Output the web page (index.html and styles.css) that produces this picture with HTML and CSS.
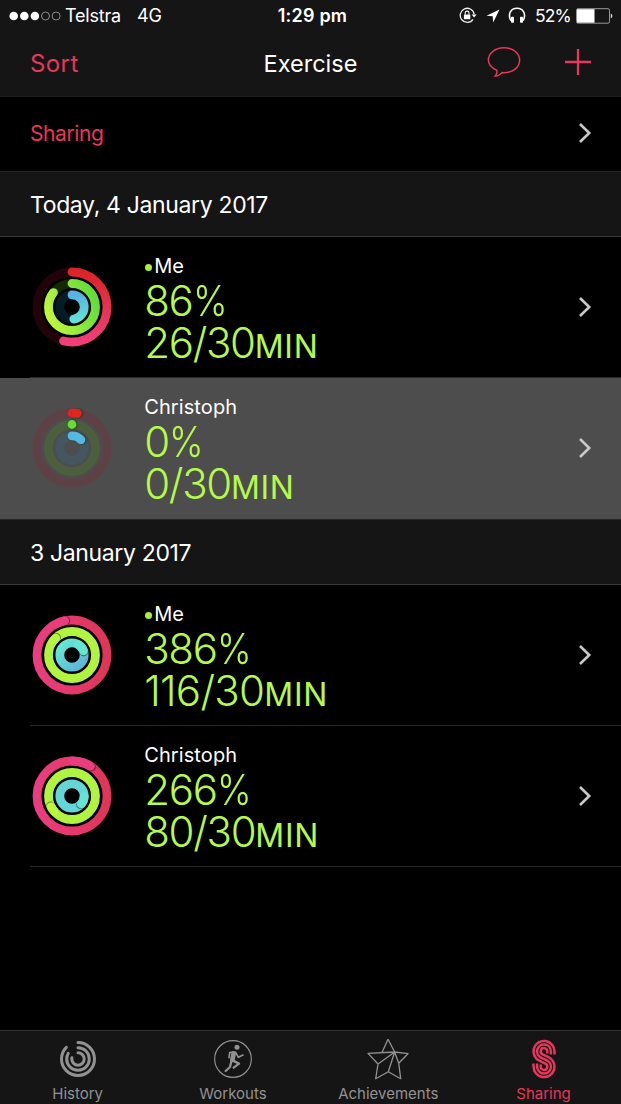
FILE: index.html
```html
<!DOCTYPE html>
<html lang="en">
<head>
  <meta charset="UTF-8" />
  <meta name="viewport" content="width=device-width, initial-scale=1.0" />
  <title>Exercise</title>
  <link rel="stylesheet" href="styles.css">
</head>
<body>

  <!-- Shared shapes and gradients -->
  <svg class="defs" width="0" height="0">
    <defs>
      <linearGradient id="red" x1="1" y1="0.5" x2="0" y2="0.5">
        <stop offset="0" stop-color="#dc2326" />
        <stop offset="0.5" stop-color="#e63350" />
        <stop offset="1" stop-color="#ee3f7c" />
      </linearGradient>
      <linearGradient id="green" x1="0.7" y1="1" x2="0.3" y2="0">
        <stop offset="0" stop-color="#62dd3c" />
        <stop offset="1" stop-color="#bdf53c" />
      </linearGradient>
      <linearGradient id="blue" x1="1" y1="0.5" x2="0" y2="0.5">
        <stop offset="0" stop-color="#55b4e4" />
        <stop offset="1" stop-color="#62e0d8" />
      </linearGradient>
      <linearGradient id="pinkFull" x1="0.5" y1="1" x2="0.5" y2="0">
        <stop offset="0" stop-color="#df3558" />
        <stop offset="1" stop-color="#ea3d80" />
      </linearGradient>
      <linearGradient id="blueFull" x1="0" y1="1" x2="1" y2="0">
        <stop offset="0" stop-color="#5cb2dc" />
        <stop offset="1" stop-color="#66ead2" />
      </linearGradient>
      <symbol id="chevron" viewBox="0 0 14 22">
        <path d="M2 2l9.2 9L2 20" fill="none" stroke="#c9c9c9" stroke-width="2.6" />
      </symbol>
    </defs>
  </svg>

  <header class="top">
    <div class="status">
      <div class="status-left">
        <svg class="signal" width="52" height="10" viewBox="0 0 52 10">
          <g fill="#fff">
            <circle cx="4.7" cy="5" r="4.3" />
            <circle cx="15.3" cy="5" r="4.3" />
            <circle cx="25.9" cy="5" r="4.3" />
          </g>
          <g fill="none" stroke="#aaa" stroke-width="0.8">
            <circle cx="36.5" cy="5" r="4" />
            <circle cx="47.1" cy="5" r="4" />
          </g>
        </svg>
        <span class="carrier">Telstra</span>
        <span>4G</span>
      </div>
      <div class="time">1:29 pm</div>
      <div class="status-right">
        <svg class="lock" width="18" height="17" viewBox="0 0 18 17">
          <path d="M14 12.3A7 7 0 1 1 15.2 7.4" fill="none" stroke="#eee" stroke-width="1.3" />
          <path d="M12.6 7.4h5l-2.5 3z" fill="#fff" />
          <rect x="4.9" y="7.4" width="6.4" height="4.8" rx="0.5" fill="#fff" />
          <path d="M6.2 7.6V6a1.9 1.9 0 0 1 3.8 0v1.6" fill="none" stroke="#fff" stroke-width="1.1" />
        </svg>
        <svg class="arrow" width="14" height="14" viewBox="0 0 14 14">
          <path d="M13.5 0.5L0.5 6.8l6.2 0.5 0.5 6.2z" fill="#fff" />
        </svg>
        <svg class="phones" width="18" height="17" viewBox="0 0 18 17">
          <path d="M2.8 13.6C-0.6 7 3 1.3 9 1.3S18.6 7 15.2 13.6" fill="none" stroke="#fff" stroke-width="1.6" />
          <rect x="3" y="9.8" width="3" height="6" rx="0.8" fill="#fff" />
          <rect x="12" y="9.8" width="3" height="6" rx="0.8" fill="#fff" />
        </svg>
        <span class="percent">52%</span>
        <svg class="battery" width="37" height="16" viewBox="0 0 37 16">
          <rect x="0.5" y="0.7" width="33" height="14.5" rx="1.5" fill="none" stroke="#999" />
          <rect x="1" y="1.2" width="17.5" height="13.5" fill="#fff" />
          <path d="M34.8 5.5c2 0.8 2 4.2 0 5z" fill="#ddd" />
        </svg>
      </div>
    </div>
    <nav class="nav">
      <a class="sort">Sort</a>
      <h1>Exercise</h1>
      <div class="actions">
        <svg width="34" height="32" viewBox="0 0 34 32">
          <path d="M9.8 24.3C4.6 21.8 1.4 18.2 1.4 14.2 1.4 7.1 8.2 1.7 17 1.7s15.6 5.4 15.6 12.5S25.8 26.7 17 26.7c-0.7 0-1.3 0-2 -0.1C13.2 28.8 11 30 8.2 30.1 9.6 28.6 10.2 26.8 9.8 24.3z" fill="none" stroke="#e8375c" stroke-width="1.5" />
        </svg>
        <svg width="26" height="26" viewBox="0 0 26 26">
          <path d="M13 0v26M0 13h26" stroke="#e8375c" stroke-width="2.3" />
        </svg>
      </div>
    </nav>
  </header>

  <main>
    <div class="link-row">
      <span>Sharing</span>
      <svg class="chevron"><use href="#chevron" /></svg>
    </div>

    <h2>Today, 4 January 2017</h2>

    <div class="row">
      <svg class="rings" viewBox="-40 -40 80 80">
        <g class="track">
          <circle r="35" stroke="#23030a" />
          <circle r="23.5" stroke="#132803" />
          <circle r="12.2" stroke="#061c24" />
        </g>
        <g class="arc">
          <circle r="35" pathLength="360" stroke="url(#red)" stroke-dasharray="194 360" />
          <circle r="23.5" pathLength="360" stroke="url(#green)" stroke-dasharray="308 360" />
          <circle r="12.2" pathLength="360" stroke="url(#blue)" stroke-dasharray="171 360" />
        </g>
      </svg>
      <div class="info">
        <div class="name me">Me</div>
        <div class="value">86<span class="pct">%</span></div>
        <div class="value">26/30<small>MIN</small></div>
      </div>
      <svg class="chevron"><use href="#chevron" /></svg>
    </div>

    <div class="row selected">
      <svg class="rings" viewBox="-40 -40 80 80">
        <g class="track">
          <circle r="35" stroke="#5e4145" />
          <circle r="23.5" stroke="#4b5f3f" />
          <circle r="12.2" stroke="#445660" />
        </g>
        <g class="arc shadow">
          <circle r="35" pathLength="360" stroke="#de251f" stroke-dasharray="9 360" />
          <circle r="23.5" pathLength="360" stroke="#66dc36" stroke-dasharray="0.1 360" />
          <circle r="12.2" pathLength="360" stroke="#52b9e2" stroke-dasharray="47 360" />
        </g>
      </svg>
      <div class="info">
        <div class="name">Christoph</div>
        <div class="value">0<span class="pct">%</span></div>
        <div class="value">0/30<small>MIN</small></div>
      </div>
      <svg class="chevron"><use href="#chevron" /></svg>
    </div>

    <h2>3 January 2017</h2>

    <div class="row">
      <svg class="rings" viewBox="-40 -40 80 80">
        <g class="arc full">
          <circle r="35" stroke="url(#pinkFull)" />
          <circle r="23.5" stroke="#b0f340" />
          <circle r="12.2" stroke="url(#blueFull)" />
        </g>
        <!-- ring ends that overlap their own start -->
        <g class="tip-shadow">
          <circle cx="-6.2" cy="-34.4" r="4.3" />
          <circle cx="-15.5" cy="-17.7" r="4.3" />
          <circle cx="11.8" cy="-3.1" r="4.3" />
        </g>
        <g class="tip">
          <path d="M-14 -32.08A35 35 0 0 1 -7.3 -34.23" stroke="#e93d7d" />
          <path d="M-18.5 -14.5A23.5 23.5 0 0 1 -16.3 -16.9" stroke="#b8f53e" />
          <path d="M6.1 -10.57A12.2 12.2 0 0 1 11.5 -4.2" stroke="#66e6d2" />
        </g>
      </svg>
      <div class="info">
        <div class="name me">Me</div>
        <div class="value">386<span class="pct">%</span></div>
        <div class="value wide">116/30<small>MIN</small></div>
      </div>
      <svg class="chevron"><use href="#chevron" /></svg>
    </div>

    <div class="row">
      <svg class="rings" viewBox="-40 -40 80 80">
        <g class="arc full">
          <circle r="35" stroke="url(#pinkFull)" />
          <circle r="23.5" stroke="#b0f340" />
          <circle r="12.2" stroke="#64d6d8" />
        </g>
        <g class="tip-shadow">
          <circle cx="19.5" cy="-29.1" r="4.3" />
          <circle cx="-21.4" cy="9.7" r="4.3" />
          <circle cx="8.5" cy="8.7" r="4.3" />
        </g>
        <g class="tip">
          <path d="M0 -35A35 35 0 0 1 18.5 -29.7" stroke="#e93d80" />
          <path d="M-18 15.1A23.5 23.5 0 0 1 -20.9 10.7" stroke="#b8f83e" />
          <path d="M12.2 0A12.2 12.2 0 0 1 9.3 7.9" stroke="#64e4d6" />
        </g>
      </svg>
      <div class="info">
        <div class="name">Christoph</div>
        <div class="value">266<span class="pct">%</span></div>
        <div class="value">80/30<small>MIN</small></div>
      </div>
      <svg class="chevron"><use href="#chevron" /></svg>
    </div>
  </main>

  <footer class="tabs">
    <a class="tab">
      <svg width="42" height="42" viewBox="-21 -21 42 42">
        <g fill="none" stroke="#929292" stroke-width="3" stroke-linecap="round" transform="rotate(-90)">
          <circle r="16.5" pathLength="360" stroke-dasharray="315 360" />
          <circle r="11.3" pathLength="360" stroke-dasharray="300 360" />
          <circle r="6.2" pathLength="360" stroke-dasharray="282 360" />
        </g>
      </svg>
      <span>History</span>
    </a>
    <a class="tab">
      <svg width="42" height="42" viewBox="-5 -4 126 126">
        <g fill="none" stroke="#929292" stroke-linecap="round" stroke-linejoin="round">
          <circle cx="58" cy="59" r="55" stroke-width="3.5" />
          <path d="M60 42L56 62" stroke-width="14" />
          <path d="M60 38L48 40L46 55" stroke-width="5" />
          <path d="M66 39L74 54L88 47" stroke-width="5" />
          <path d="M58 64L76 73L60 85" stroke-width="7" />
          <path d="M53 66L49 83L36 95" stroke-width="7" />
        </g>
        <circle cx="70" cy="24" r="7.5" fill="#929292" />
      </svg>
      <span>Workouts</span>
    </a>
    <a class="tab">
      <svg width="42" height="42" viewBox="367 1038.3 42 42">
        <path d="M388 1039.5L394.7 1052.3L408 1054L398.7 1063.5L400.7 1079L388.3 1072L375.7 1079L378 1064.3L368 1053.7L394.7 1052.3L378 1064.3M388 1039.5L382 1052.8M394.7 1052.3L388.3 1072M394.7 1052.3L398.7 1063.5" fill="none" stroke="#929292" stroke-width="1.3" stroke-linejoin="round" />
      </svg>
      <span>Achievements</span>
    </a>
    <a class="tab active">
      <svg width="42" height="42" viewBox="-21 -21 42 42">
        <g fill="none" stroke="#e8375c" stroke-width="2.5">
          <path d="M10.5 -4.5V-7.6A10.5 10.5 0 1 0 -4.4 1.93L1.38 4.6A3.3 3.3 0 1 1 -3.3 7.6V5.5" />
          <path d="M6.9 -4.5V-7.6A6.9 6.9 0 1 0 -2.89 -1.33L2.89 1.33A6.9 6.9 0 1 1 -6.9 7.6V4.5" />
          <path d="M3.3 -5.5V-7.6A3.3 3.3 0 1 0 -1.38 -4.6L4.4 -1.93A10.5 10.5 0 1 1 -10.5 7.6V4.5" />
        </g>
      </svg>
      <span>Sharing</span>
    </a>
  </footer>

</body>
</html>
```
FILE: styles.css
```css
/* Global Styles */
* {
  box-sizing: border-box;
}

body {
  font-family: Inter, 'Liberation Sans', sans-serif;
  background-color: #000;
  color: #fff;
  margin: 0;
  height: 1104px;
  display: flex;
  flex-direction: column;
  overflow: hidden;
}

svg {
  display: block;
  flex-shrink: 0;
}

.defs {
  position: absolute;
}

/* Header */
.top {
  height: 97px;
  background-color: #151515;
  border-bottom: 1px solid #1c1c1c;
}

.status {
  height: 31px;
  display: grid;
  grid-template-columns: 1fr auto 1fr;
  align-items: center;
  padding: 0 8px 0 9px;
  font-size: 18px;
}

.status-left,
.status-right {
  display: flex;
  align-items: center;
}

.status-right {
  justify-content: flex-end;
}

.carrier {
  margin: 0 16px 0 4px;
  letter-spacing: -0.2px;
}

.time {
  padding-left: 3px;
  font-weight: 600;
  letter-spacing: 0.2px;
}

.arrow {
  margin: 0 8px 0 9px;
}

.percent {
  margin: 0 5px 0 9px;
  font-size: 17.5px;
  letter-spacing: -0.8px;
}

.nav {
  height: 65px;
  display: grid;
  grid-template-columns: 1fr auto 1fr;
  align-items: center;
  padding: 0 30px;
}

.sort {
  color: #e8375c;
  font-size: 24px;
  letter-spacing: 0.4px;
}

h1 {
  margin: 0;
  font-size: 23.5px;
  font-weight: 400;
}

.actions {
  display: flex;
  align-items: center;
  justify-content: flex-end;
  gap: 44px;
  padding-bottom: 4px;
}

/* List */
main {
  flex: 1;
}

.link-row {
  height: 74px;
  display: flex;
  align-items: center;
  justify-content: space-between;
  padding: 0 29px 2px 30px;
  color: #e8375c;
  font-size: 21px;
  letter-spacing: -0.4px;
}

h2 {
  height: 66px;
  margin: 0;
  padding: 1px 30px 0;
  background-color: #151515;
  border-top: 1px solid #252525;
  border-bottom: 1px solid #383838;
  font-size: 23px;
  font-weight: 400;
  line-height: 65px;
  letter-spacing: -0.35px;
}

.row {
  height: 141px;
  display: flex;
  align-items: center;
  padding: 0 29px 2px 0;
  background: linear-gradient(#282828, #282828) 30px 100% / 100% 1px no-repeat;
}

.row.selected {
  background: #4d4d4d;
}

.rings {
  width: 80px;
  height: 80px;
  margin: 0 32.5px 0 31.7px;
}

.chevron {
  width: 14px;
  height: 22px;
}

.info {
  flex: 1;
  align-self: flex-start;
  padding-top: 17px;
}

.name {
  height: 26px;
  display: flex;
  align-items: flex-start;
  font-size: 20px;
  line-height: 25px;
  letter-spacing: 0.1px;
}

.me::before {
  content: "";
  width: 7px;
  height: 7px;
  margin: 10px 2px 0 1px;
  border-radius: 50%;
  background-color: #a6f03c;
}

.value {
  color: #b5f94b;
  font-size: 42px;
  font-weight: 300;
  line-height: 42px;
  letter-spacing: -1.3px;
  white-space: nowrap;
}

.value.wide {
  letter-spacing: -0.7px;
}

.value small {
  font-size: 32px;
  font-weight: 400;
  letter-spacing: 0.7px;
}

.pct {
  display: inline-block;
  transform: scaleX(0.88);
  transform-origin: left;
}

/* Rings */
.track circle,
.arc circle,
.tip path {
  fill: none;
  stroke-width: 8.8px;
}

.arc circle {
  transform: rotate(-90deg);
  stroke-linecap: round;
}

.arc.shadow {
  filter: drop-shadow(1px 0 1px rgba(0, 0, 0, 0.4));
}

.tip path {
  stroke-linecap: round;
}

.tip-shadow circle {
  fill: rgba(0, 0, 0, 0.45);
}

/* Tab bar */
.tabs {
  height: 74px;
  display: grid;
  grid-template-columns: repeat(4, 155.3px);
  background-color: #151515;
  border-top: 1px solid #333;
}

.tab {
  display: flex;
  flex-direction: column;
  align-items: center;
  padding-top: 7px;
  color: #929292;
  font-size: 15px;
  line-height: 18px;
}

.tab span {
  margin-top: 5px;
}

.tab.active {
  color: #e8375c;
}
```
